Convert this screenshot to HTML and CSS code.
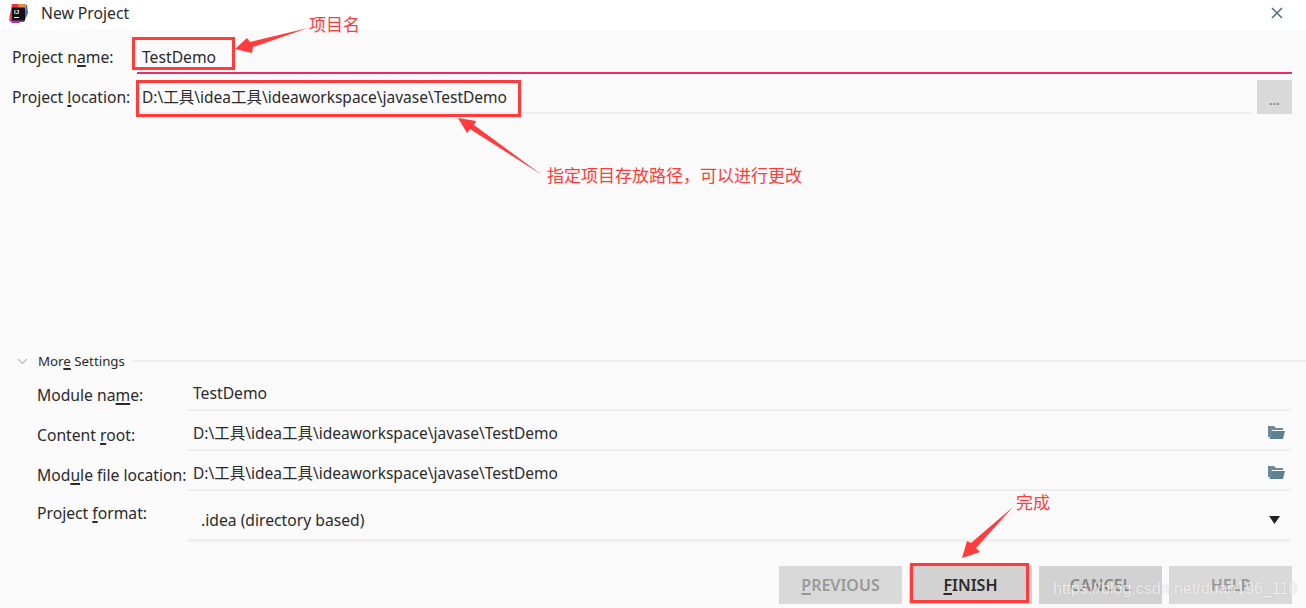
FILE: index.html
```html
<!DOCTYPE html>
<html lang="en">
<head>
<meta charset="UTF-8">
<meta name="viewport" content="width=device-width, initial-scale=1.0">
<title>New Project</title>
<link rel="stylesheet" href="styles.css">
</head>
<body>

<div class="dialog">
  <header class="titlebar">
    <svg class="logo" width="19" height="19" viewBox="0 0 19 19">
      <path d="M3 0h8L5 10 0 16z" fill="#f0323c"/>
      <path d="M10 1h8l1 8-4 9H5z" fill="#4a5fd8"/>
      <path d="M0 16l6-7 5 10H3z" fill="#c2339a"/>
      <path d="M9 0h8v6h-6z" fill="#f0883c"/>
      <rect x="3" y="3.500" width="13" height="13" fill="#111"/>
      <text x="5" y="10" class="logo-text">IJ</text>
      <rect x="5" y="13" width="5" height="1" fill="#eee"/>
    </svg>
    <span class="title">New Project</span>
    <svg class="close" width="12" height="12" viewBox="0 0 12 12">
      <path d="M1 1l10 10M11 1L1 11" stroke="#54707e" stroke-width="1.6" fill="none"/>
    </svg>
  </header>

  <main class="content">
    <div class="row-name">
      <label class="top-label">Project n<u>a</u>me:</label>
      <div class="name-input">TestDemo</div>
    </div>
    <div class="row-location">
      <label class="top-label">Project <u>l</u>ocation:</label>
      <div class="location-input path">D:\工具\idea工具\ideaworkspace\javase\TestDemo</div>
      <button class="browse">...</button>
    </div>

    <div class="more">
      <svg class="chevron" width="11" height="7" viewBox="0 0 11 7">
        <path d="M1 1l4.500 4.500L10 1" stroke="#b4bcc0" stroke-width="1.2" fill="none"/>
      </svg>
      <span class="more-text">Mor<u>e</u> Settings</span>
      <div class="more-line"></div>
    </div>

    <div class="settings">
      <div class="setting">
        <label>Module na<u>m</u>e:</label>
        <div class="field">TestDemo</div>
      </div>
      <div class="setting">
        <label>Content <u>r</u>oot:</label>
        <div class="field path">D:\工具\idea工具\ideaworkspace\javase\TestDemo
          <svg class="folder" width="18" height="14" viewBox="0 0 18 14">
            <path d="M1 1h6l2 2h7v2H5L3 12H1z" fill="#6b8798"/>
            <path d="M4.500 6H18l-2 8H2.500z" fill="#5f7f93"/>
          </svg>
        </div>
      </div>
      <div class="setting">
        <label>Mod<u>u</u>le file location:</label>
        <div class="field path">D:\工具\idea工具\ideaworkspace\javase\TestDemo
          <svg class="folder" width="18" height="14" viewBox="0 0 18 14">
            <path d="M1 1h6l2 2h7v2H5L3 12H1z" fill="#6b8798"/>
            <path d="M4.500 6H18l-2 8H2.500z" fill="#5f7f93"/>
          </svg>
        </div>
      </div>
      <div class="setting setting-format">
        <label>Project <u>f</u>ormat:</label>
        <div class="select">.idea (directory based)
          <svg class="caret" width="11" height="8" viewBox="0 0 11 8"><path d="M0 0h11L5.500 8z" fill="#222"/></svg>
        </div>
      </div>
    </div>

    <div class="buttons">
      <button class="btn disabled"><u>P</u>REVIOUS</button>
      <button class="btn primary"><u>F</u>INISH</button>
      <button class="btn disabled dark">CANCEL</button>
      <button class="btn disabled">HELP</button>
    </div>
  </main>
</div>

<!-- annotations drawn on top of the dialog -->
<div class="mark box-name"></div>
<div class="mark box-location"></div>
<div class="mark box-finish"></div>
<svg class="arrows" width="1306" height="608" viewBox="0 0 1306 608">
  <path d="M308 28L250 42l-3-4-12 11 17 4 1-6z" fill="#ff3b3b"/>
  <path d="M542 175L474 125l2-4-18-3 9 15 3-4z" fill="#ff3b3b"/>
  <path d="M1013 507L971 543l-4-2-5 17 18-6-4-4z" fill="#ff3b3b"/>
</svg>
<span class="note note-name">项目名</span>
<span class="note note-location">指定项目存放路径，可以进行更改</span>
<span class="note note-finish">完成</span>
<span class="watermark">https://blog.csdn.net/duan196_118</span>

</body>
</html>
```

FILE: styles.css
```css
body {
  margin: 0;
  width: 1306px;
  height: 608px;
  overflow: hidden;
  position: relative;
  background: #fafafa;
  color: #2b2b2b;
  font-family: "Noto Sans", "Noto Sans CJK SC", sans-serif;
  font-size: 15.7px;
}

u {
  text-underline-offset: 2px;
  text-decoration-thickness: 2px;
}

.dialog {
  display: flex;
  flex-direction: column;
  height: 608px;
}

.titlebar {
  display: flex;
  align-items: center;
  flex: 0 0 30px;
  background: #fff;
  padding: 0 23px 4px 9px;
  box-sizing: border-box;
}

.logo {
  margin-right: 13px;
}

.logo-text {
  font-family: "Liberation Sans", sans-serif;
  font-size: 6px;
  font-weight: bold;
  fill: #fff;
}

.title {
  flex: 1;
}

.content {
  flex: 1;
  display: flex;
  flex-direction: column;
  padding: 0 14px 3px 12px;
  position: relative;
}

.path {
  font-size: 15.5px;
}

.row-name {
  display: flex;
  height: 43px;
}

.top-label {
  display: block;
  width: 125px;
  line-height: 20px;
  padding-top: 17px;
  flex: none;
}

.name-input {
  flex: 1;
  border-bottom: 2px solid #ea2a6a;
  line-height: 20px;
  padding: 17px 0 0 5px;
  box-sizing: border-box;
  height: 44px;
}

.row-location {
  display: flex;
  height: 41px;
}

.row-location .top-label {
  padding-top: 14px;
}

.location-input {
  flex: 1;
  margin-right: 5px;
  border-bottom: 2px solid #eeeeee;
  line-height: 20px;
  padding: 14px 0 0 5px;
  height: 41px;
  box-sizing: border-box;
}

.browse {
  flex: 0 0 35px;
  height: 34px;
  margin-top: 7px;
  border: none;
  background: #d9d9d9;
  color: #8c8c8c;
  font-family: inherit;
  font-size: 13px;
  font-weight: bold;
  padding: 6px 0 0;
}

.more {
  display: flex;
  align-items: center;
  margin: 237px -14px 0 5px;
  height: 20px;
}

.chevron {
  margin-right: 10px;
}

.more-text {
  font-size: 13.3px;
  margin: 0 7px 0 0;
}

.more-line {
  flex: 1;
  height: 2px;
  background: #eeeeee;
}

.settings {
  margin: 0 2px 0 25px;
}

.setting {
  display: flex;
  height: 40px;
}

.setting label {
  flex: 0 0 151px;
  line-height: 20px;
  padding-top: 14px;
  white-space: nowrap;
}

.field {
  flex: 1;
  display: flex;
  justify-content: space-between;
  align-items: flex-start;
  padding: 12px 5px 0;
  line-height: 20px;
  border-bottom: 2px solid #eeeeee;
  box-sizing: border-box;
}

.folder {
  margin-top: 2px;
}

.setting-format {
  height: 51px;
}

.setting-format label {
  padding-top: 12px;
}

.select {
  flex: 1;
  display: flex;
  justify-content: space-between;
  align-items: center;
  padding: 10px 10px 0 13px;
  height: 51px;
  border-bottom: 3px solid #eeeeee;
  box-sizing: border-box;
}

.buttons {
  display: flex;
  justify-content: flex-end;
  gap: 7px;
  margin-top: 24px;
}

.btn {
  width: 123px;
  height: 38px;
  border: none;
  font-family: inherit;
  font-size: 16px;
  font-weight: 600;
  padding: 0;
  background: #d9d9d9;
  color: #999;
}

.btn.dark {
  background: #d2d2d2;
  color: #888;
}

.btn.primary {
  background: #d2d2d2;
  color: #2b2b2b;
}

.mark {
  position: absolute;
  border: 3px solid #ff3b3b;
  box-sizing: border-box;
}

.box-name {
  left: 132px;
  top: 37px;
  width: 103px;
  height: 33px;
}

.box-location {
  left: 136px;
  top: 80px;
  width: 385px;
  height: 37px;
}

.box-finish {
  left: 910px;
  top: 563px;
  width: 119px;
  height: 40px;
}

.arrows {
  position: absolute;
  left: 0;
  top: 0;
}

.note {
  position: absolute;
  color: #ff3b3b;
  font-family: "Noto Sans CJK SC", sans-serif;
  font-size: 17px;
  line-height: 20px;
  white-space: nowrap;
}

.note-name {
  left: 309px;
  top: 14px;
}

.note-location {
  left: 547px;
  top: 165px;
}

.note-finish {
  left: 1016px;
  top: 492px;
}

.watermark {
  position: absolute;
  left: 1053px;
  top: 579px;
  font-family: "Liberation Sans", sans-serif;
  font-size: 16px;
  line-height: 20px;
  color: rgba(255, 255, 255, 0.8);
  text-shadow: 0 0 1px rgba(130, 130, 130, 0.5);
  white-space: nowrap;
}
```
